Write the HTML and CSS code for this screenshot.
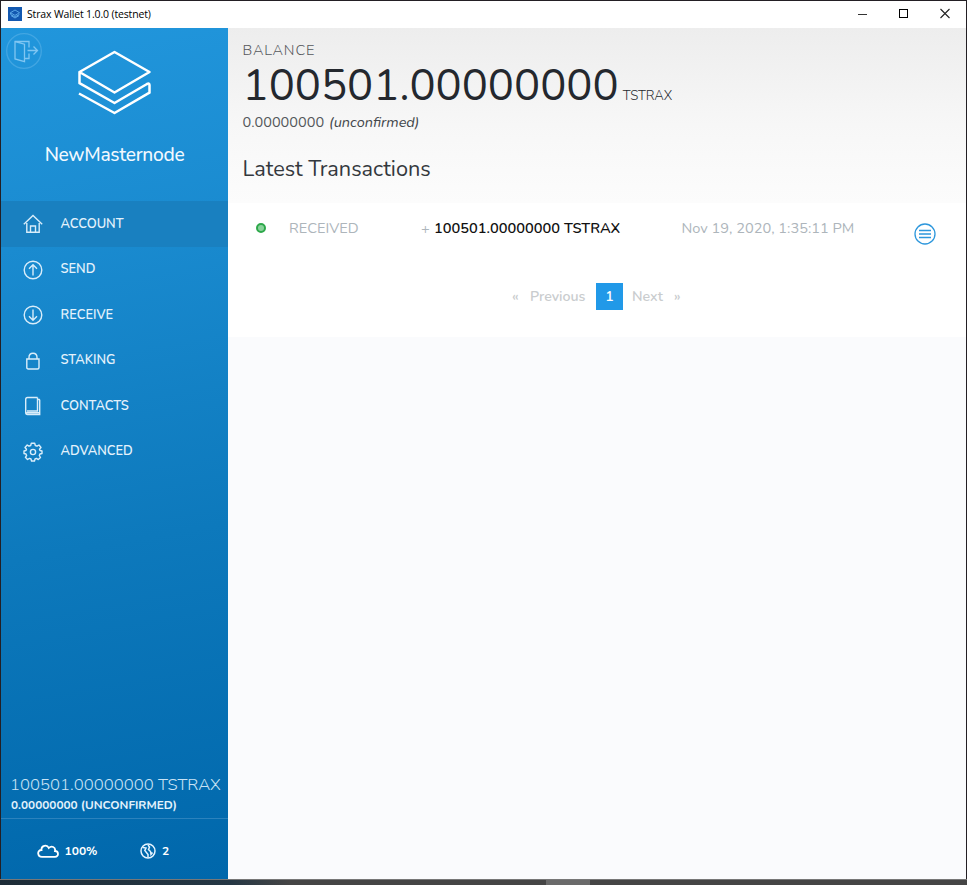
FILE: index.html
```html
<!DOCTYPE html>
<html lang="en">
<head>
<meta charset="utf-8">
<title>Strax Wallet</title>
<link rel="stylesheet" href="styles.css">
</head>
<body>
<div class="window">
  <header class="titlebar">
    <svg class="app-icon" viewBox="0 0 14 14"><rect width="14" height="14" fill="#1358b0"/><path d="M7 3 11.5 5.7 7 8.4 2.5 5.7ZM2.5 5.8V7.3L7 10 11.5 7.3M3 8.6 7 11 11 8.6" fill="none" stroke="#69b8f2" stroke-width=".8"/></svg>
    <span class="app-title">Strax Wallet 1.0.0 (testnet)</span>
    <div class="controls">
      <svg viewBox="0 0 11 11"><path d="M1 6.5H10" stroke="#333"/></svg>
      <svg viewBox="0 0 11 11"><rect x="1.5" y="1.5" width="8" height="8" fill="none" stroke="#000"/></svg>
      <svg viewBox="0 0 11 11"><path d="M1.500 1 10.500 10M10.500 1 1.500 10" stroke="#222" stroke-width="1.1"/></svg>
    </div>
  </header>
  <div class="body">
    <aside class="sidebar">
      <div class="brand">
        <svg class="logout" viewBox="0 0 36 36"><circle cx="18" cy="18" r="17.3" stroke-opacity=".35"/><path d="M9 8.5V26L18.5 28.6V11.2ZM9 8.5H23V14.500M23 20.500V25.500H18.500M21.500 17.500H31M27.500 13.500 31.500 17.500 27.500 21.500"/></svg>
        <svg class="logo" viewBox="0 0 74 66"><path d="M37.500 2 72.500 22 37.500 42.500 2.500 22ZM2.500 22V33.200L37.500 53 70 34Q72.500 32.800 72.500 35V42.700L37.500 63 2 43.500"/></svg>
        <div class="wallet-name">NewMasternode</div>
      </div>
      <nav class="menu">
        <a class="item active"><svg viewBox="0 0 20 20"><path d="M.8 10.200 10 1.500 19.200 10.200M3.800 9V18.200H16.200V9M7.500 18V12H12.500V18"/></svg><span class="label">ACCOUNT</span></a>
        <a class="item"><svg viewBox="0 0 20 20"><circle cx="10" cy="10" r="8.800"/><path d="M10 15.500V5M6 8.700 10 4.700 14 8.700"/></svg><span class="label">SEND</span></a>
        <a class="item"><svg viewBox="0 0 20 20"><circle cx="10" cy="10" r="8.800"/><path d="M10 4.500V15M6 11.300 10 15.300 14 11.300"/></svg><span class="label">RECEIVE</span></a>
        <a class="item"><svg viewBox="0 0 20 20"><path d="M3.800 8H16V16.500Q16 18 14.500 18H5.300Q3.800 18 3.800 16.500ZM6 8V6.500C6 .8 14 .8 14 6.500V8"/></svg><span class="label">STAKING</span></a>
        <a class="item"><svg viewBox="0 0 20 20"><path d="M14.500 1.500H4.500Q2.700 1.500 2.700 3.500V16.500Q2.700 18.500 4.500 18.500H16.700V4Q16.700 3.300 14.700 3.300M4 15H14.500V1.500M3.500 16.700H16.500"/></svg><span class="label">CONTACTS</span></a>
        <a class="item"><svg viewBox="0 0 20 20"><circle cx="10" cy="10" r="2.600"/><path d="M8.300 1.200H11.700L12.300 3.500 14 4.200 16 3 18 5.500 16.500 7.300 17 8.500 19 9V11.500L16.900 12 16.300 13.500 17.500 15.500 15.300 17.600 13.500 16.400 12 17 11.500 19H8.500L8 17 6.500 16.400 4.500 17.500 2.400 15.300 3.600 13.500 3 12 1 11.500V9L3 8.500 3.500 7.300 2 5.500 4.200 3 6 4.200 7.700 3.500Z" stroke-linejoin="round"/></svg><span class="label">ADVANCED</span></a>
      </nav>
      <div class="side-balance">
        <div class="side-total">100501.00000000 TSTRAX</div>
        <div class="side-pending">0.00000000 (UNCONFIRMED)</div>
      </div>
      <footer class="status">
        <svg class="cloud" viewBox="0 0 22 14"><path d="M5 12.800C.2 12.800-.2 6 4.500 6 4 1.500 10 0 11.800 4 14.500 1.200 18.800 3 18 7 22 7 22 12.800 18 12.800Z"/></svg>
        <span class="sync">100%</span>
        <svg class="globe" viewBox="0 0 16 16"><circle cx="8" cy="8" r="7"/><path d="M3 4.500 6 5 4.800 7.500 8 11.500V14.500M8 2 9.500 4 8.500 6.500 10.500 8.500 11 11.500 12.500 9.500"/></svg>
        <span class="peers">2</span>
      </footer>
    </aside>
    <main class="content">
      <section class="summary">
        <div class="caption">BALANCE</div>
        <div class="total"><span class="amount">100501.00000000</span><span class="unit">TSTRAX</span></div>
        <div class="pending"><span class="pending-value">0.00000000</span><em>(unconfirmed)</em></div>
        <h2>Latest Transactions</h2>
      </section>
      <section class="history">
        <div class="row">
          <i class="dot"></i>
          <span class="kind">RECEIVED</span>
          <span class="sum"><span class="plus">+</span><b>100501.00000000 TSTRAX</b></span>
          <span class="date">Nov 19, 2020, 1:35:11 PM</span>
          <svg class="details" viewBox="0 0 22 22"><circle cx="11" cy="11" r="10"/><path d="M5 7.500H17M5 11H17M5 14.500H17"/></svg>
        </div>
        <div class="pager">
          <span class="laquo">«</span><span class="prev">Previous</span><span class="page">1</span><span class="next">Next</span><span class="raquo">»</span>
        </div>
      </section>
    </main>
  </div>
</div>
<div class="taskbar"><div class="task"></div></div>
</body>
</html>
```
FILE: styles.css
```css
* { box-sizing: border-box; }
body {
  margin: 0;
  width: 967px;
  height: 885px;
  overflow: hidden;
  background: #222;
  font-family: Nunito, Lato, "Open Sans", sans-serif;
  white-space: nowrap;
}
svg { display: block; flex: none; fill: none; }
.window {
  height: 879px;
  border: solid #231f24;
  border-width: 1px 1px 0;
  display: flex;
  flex-direction: column;
  background: #fafbfd;
}
.titlebar { height: 27px; background: #fff; display: flex; align-items: center; padding: 0 16px 2px 7px; }
.app-icon { width: 14px; height: 14px; margin-right: 5px; }
.app-title { font: 10.5px/14px "Open Sans", sans-serif; color: #000; letter-spacing: -.15px; }
.controls { display: flex; gap: 30px; margin-left: auto; }
.controls svg { width: 11px; height: 11px; }
.body { flex: 1; display: flex; min-height: 0; }

.sidebar {
  width: 227px;
  display: flex;
  flex-direction: column;
  color: #e4f2fc;
  background: linear-gradient(170deg, #2196dc 0%, #1a8bd0 25%, #0d79bc 60%, #0067ab 100%);
}
.brand { height: 173px; position: relative; display: flex; flex-direction: column; align-items: center; padding-top: 22px; }
.logout { position: absolute; left: 5px; top: 5px; width: 36px; height: 36px; stroke: #80c6f2; stroke-width: 1.3; }
.logo { width: 74px; height: 66px; margin-right: 1px; stroke: #fff; stroke-width: 2.5; stroke-linejoin: round; }
.wallet-name { margin-top: 27px; font-size: 19.2px; line-height: 24px; font-weight: 500; color: #f2f9ff; letter-spacing: -.3px; }
.item { height: 45.5px; display: flex; align-items: center; padding-left: 21.500px; }
.item.active { background: #1980c0; }
.item svg { width: 20px; height: 20px; margin: 1px 18px 0 0; stroke: #d9edfa; stroke-width: 1.4; }
.label { font-size: 12.9px; line-height: 18px; font-weight: 600; }
.side-balance { margin-top: auto; height: 45px; padding-left: 10px; border-bottom: 1px solid #2b82bd; }
.side-total { margin-left: -1px; font-size: 16.7px; line-height: 22px; font-weight: 300; color: #c9e3f5; }
.side-pending { font-size: 11.800px; line-height: 18px; font-weight: 700; }
.status { height: 60px; display: flex; align-items: center; padding: 4px 0 0 36px; font-size: 12px; font-weight: 700; color: #fff; }
.cloud { width: 22px; height: 14px; margin-right: 5.500px; stroke: #fff; stroke-width: 1.8; }
.globe { width: 16px; height: 16px; margin: 0 6px 0 42.500px; stroke: #e6f4ff; stroke-width: 1.5; }

.content { flex: 1; }
.summary { height: 175px; padding: 12px 0 0 14.500px; background: linear-gradient(#ededed, #f7f7f7 55%, #fcfcfc); color: #24282e; }
.caption { font-size: 14.500px; line-height: 20px; font-weight: 300; letter-spacing: .85px; color: #55585c; }
.total { display: flex; align-items: baseline; line-height: 44px; margin-top: 4px; height: 44px; }
.amount { font-size: 43.6px; font-weight: 400; }
.unit { font-size: 13.2px; font-weight: 300; margin-left: 4px; }
.pending { height: 20px; margin-top: 4px; font-size: 14.500px; line-height: 20px; color: #54575b; display: flex; }
.pending em { margin-left: 5px; color: #43474b; }
h2 { margin: 22px 0 0; font-size: 21.700px; line-height: 30px; font-weight: 400; color: #34383d; }
.history { height: 134px; background: #fff; }
.row { height: 50px; display: flex; align-items: center; padding-left: 28px; font-size: 14.600px; line-height: 20px; color: #adb5bb; }
.dot { width: 10px; height: 10px; border: 2px solid #2da84a; border-radius: 50%; background: #8bd29c; margin-right: 23px; }
.kind { width: 132px; }
.sum { width: 260.500px; display: flex; }
.plus { width: 13px; }
.sum b { font-weight: 600; color: #111; }
.date { width: 232.500px; }
.details { width: 22px; height: 22px; margin-top: 12px; stroke: #2d97dc; stroke-width: 1.3; }
.pager { height: 28px; margin-top: 29px; display: flex; align-items: center; padding-left: 284px; font-size: 14.200px; font-weight: 600; color: #c9ccce; }
.laquo { width: 18px; }
.prev { width: 66px; }
.page { width: 27px; height: 27px; line-height: 27px; text-align: center; color: #fff; background: #2199e8; margin-right: 9px; }
.next { width: 42px; }
.taskbar { height: 6px; padding-left: 546px; background: linear-gradient(90deg, #1d2c37 0, #253744 230px, #454545 290px); border-top: 1px solid #777; }
.task { width: 44px; height: 5px; background: #6a6a6a; }
```
